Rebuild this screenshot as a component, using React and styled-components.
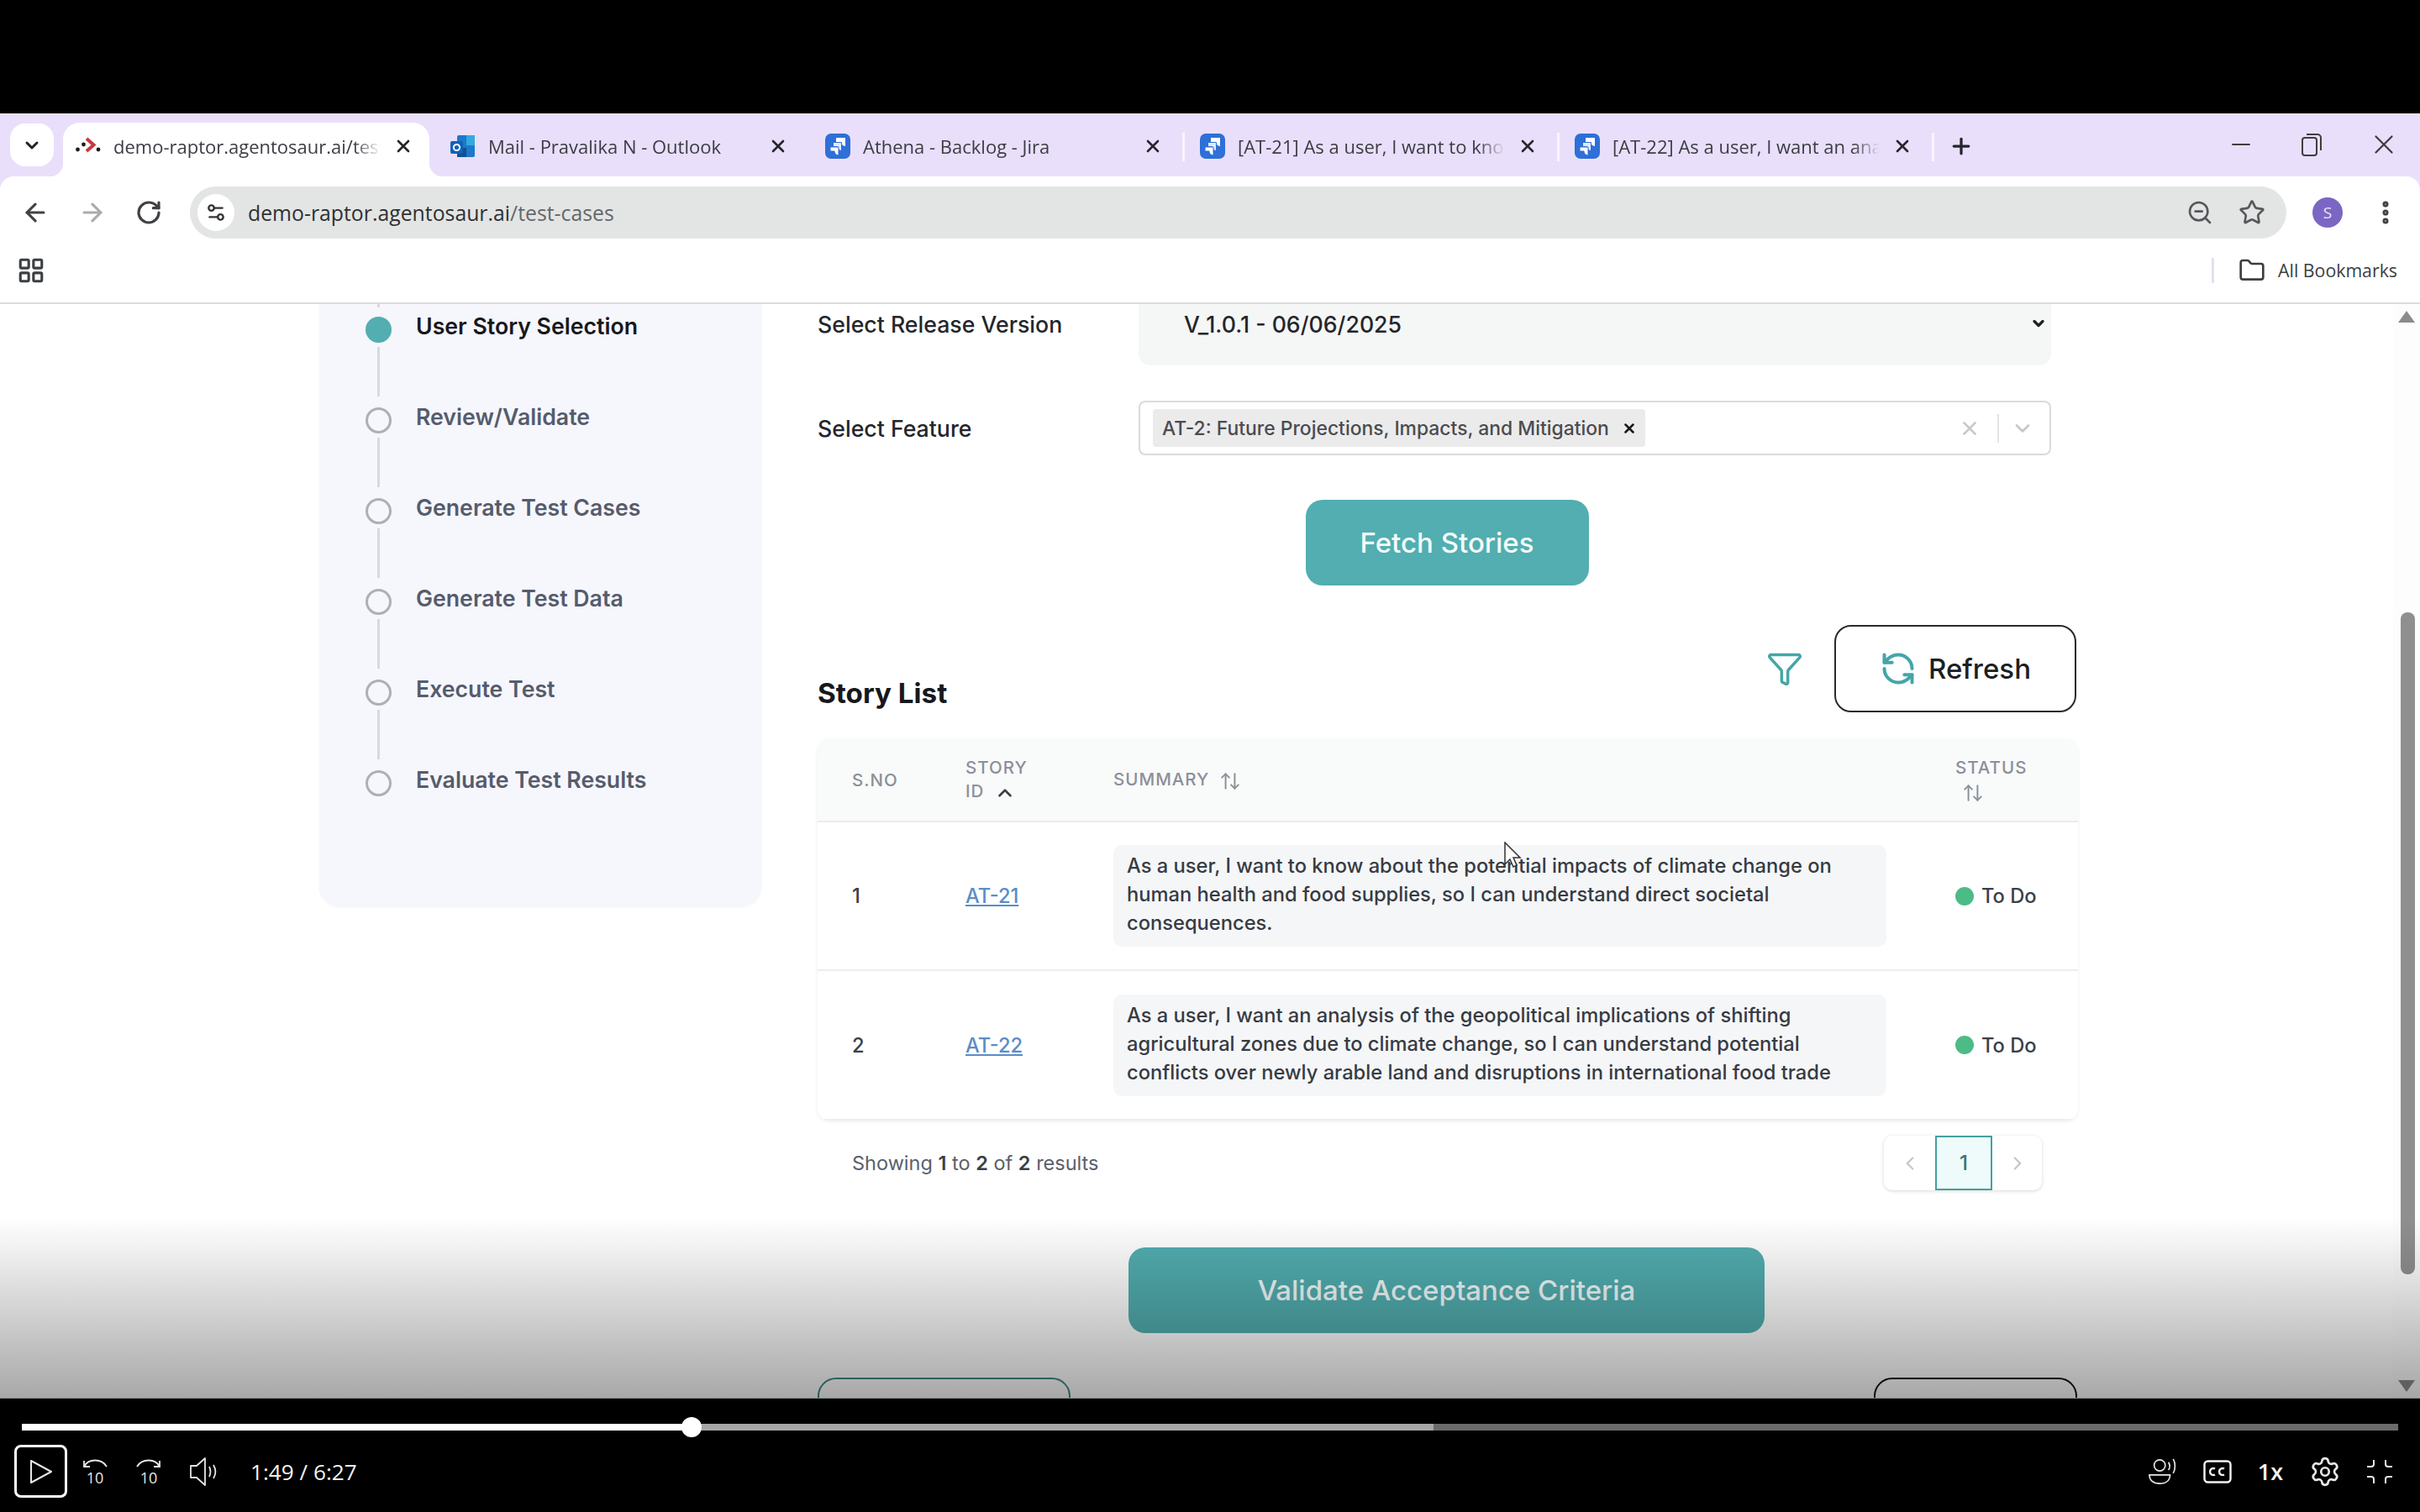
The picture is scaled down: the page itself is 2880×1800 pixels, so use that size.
import React from 'react'
import styled, { createGlobalStyle, css } from 'styled-components'
import { ChevronDown, ChevronUp, ChevronLeft, ChevronRight, X, Plus, Minus, ArrowLeft, ArrowRight, RotateCw, Star, EllipsisVertical, Folder, LayoutGrid, Settings2, ZoomOut, Filter, RefreshCcw, ArrowUpDown, Settings } from 'lucide-react'

const GlobalStyle = createGlobalStyle`
  html, body { margin: 0; padding: 0; background: #000; }
  * { box-sizing: border-box; }
`

const Screen = styled.div`
  width: 2880px;
  height: 1800px;
  overflow: hidden;
  background: #000;
  display: flex;
  flex-direction: column;
  font-family: Inter, "Liberation Sans", sans-serif;
`

const TopBand = styled.div`
  height: 135px;
  flex: none;
`

const Chrome = styled.div`
  background: #e9dffb;
  flex: none;
`

const TabStrip = styled.div`
  height: 75px;
  display: flex;
  align-items: flex-end;
  padding-left: 12px;
  font-family: "Open Sans", "Liberation Sans", sans-serif;
  font-size: 22px;
  color: #3c3c44;
`

const TabSearch = styled.div`
  width: 52px;
  height: 51px;
  margin: 0 11px 12px 0;
  border-radius: 18px;
  background: #fff;
  display: flex;
  align-items: center;
  justify-content: center;
  color: #222;
`

const flare = css`
  &::before,
  &::after {
    content: '';
    position: absolute;
    bottom: 0;
    width: 16px;
    height: 16px;
  }
  &::before {
    left: -16px;
    background: radial-gradient(circle at 0 0, transparent 16px, #fff 16.5px);
  }
  &::after {
    right: -16px;
    background: radial-gradient(circle at 100% 0, transparent 16px, #fff 16.5px);
  }
`

const separator = css`
  &::after {
    content: '';
    position: absolute;
    right: -7px;
    top: 12px;
    width: 3px;
    height: 34px;
    background: #f8f5fe;
  }
`

const Tab = styled.div`
  position: relative;
  width: 436px;
  height: 64px;
  margin-right: 10px;
  padding: 0 19px 8px 15px;
  display: flex;
  align-items: center;
  gap: 15px;
  border-radius: 20px 20px 0 0;
  background: ${p => (p.$active ? '#fff' : 'transparent')};
  ${p => p.$active && flare}
  ${p => p.$sep && separator}
`

const TabTitle = styled.span`
  flex: 1;
  overflow: hidden;
  white-space: nowrap;
  mask-image: linear-gradient(to right, #000 90%, transparent 100%);
`

const Favicon = styled.svg`
  width: 30px;
  height: 30px;
  flex: none;
`

const TabPlus = styled.div`
  width: 40px;
  height: 64px;
  margin-left: 9px;
  padding-bottom: 8px;
  display: flex;
  align-items: center;
  justify-content: center;
  color: #26262c;
`

const WindowControls = styled.div`
  margin-left: auto;
  height: 75px;
  padding: 0 24px 2px 0;
  display: flex;
  align-items: center;
  gap: 54px;
  color: #3d3d44;
`

const Toolbar = styled.div`
  height: 75px;
  background: #fff;
  border-radius: 16px 16px 0 0;
  display: flex;
  align-items: center;
  padding: 12px 24px 1px 25px;
  color: #3f4245;
`

const NavIcons = styled.div`
  display: flex;
  align-items: center;
  gap: 34px;
  margin-right: 33px;
`

const AddressBar = styled.div`
  flex: 1;
  height: 62px;
  border-radius: 31px;
  background: #e3e5e4;
  display: flex;
  align-items: center;
  padding: 0 25px 0 9px;
  font-family: "Open Sans", "Liberation Sans", sans-serif;
  font-size: 24.8px;
`

const SiteInfo = styled.div`
  width: 44px;
  height: 44px;
  border-radius: 50%;
  background: #fff;
  display: flex;
  align-items: center;
  justify-content: center;
  margin-right: 16px;
  color: #333;
`

const Host = styled.span`
  color: #2f3133;
`

const UrlPath = styled.span`
  color: #65686b;
`

const AddressIcons = styled.div`
  margin-left: auto;
  display: flex;
  align-items: center;
  gap: 30px;
  color: #55585b;
`

const Avatar = styled.div`
  width: 36px;
  height: 36px;
  margin: 0 34px 0 31px;
  border-radius: 50%;
  background: #7c66c4;
  color: #e9e3f8;
  font-size: 19px;
  display: flex;
  align-items: center;
  justify-content: center;
  font-family: "Open Sans", sans-serif;
`

const BookmarksBar = styled.div`
  height: 77px;
  background: #fff;
  border-bottom: 2px solid #dcdcdc;
  padding: 0 27px 2px 20px;
  display: flex;
  align-items: center;
  font-family: "Open Sans", "Liberation Sans", sans-serif;
  font-size: 21.3px;
  color: #3c3f42;
`

const BookmarkSep = styled.div`
  margin-left: auto;
  width: 3px;
  height: 30px;
  background: #e4dff0;
  margin-right: 29px;
`

const FolderLabel = styled.span`
  margin-left: 15px;
`

const Viewport = styled.div`
  position: relative;
  height: 1303px;
  flex: none;
  overflow: hidden;
  background: #fff;
  display: flex;
  align-items: flex-start;
  padding-left: 380px;
  border-bottom: 1px solid #7f8a80;
`

const Sidebar = styled.aside`
  width: 526px;
  height: 717px;
  flex: none;
  background: #f6f6fd;
  border-radius: 0 0 24px 24px;
  box-shadow: 0 1px 3px rgba(30, 30, 60, 0.05);
  padding-left: 55px;
  margin-right: 67px;
`

const Stub = styled.div`
  width: 3px;
  height: 4px;
  margin: 0 0 11px 14px;
  background: #d8d8de;
`

const Step = styled.div`
  display: flex;
  gap: 29px;
  height: 108px;
`

const Rail = styled.div`
  width: 31px;
  display: flex;
  flex-direction: column;
  align-items: center;
  gap: 5px;
`

const Dot = styled.div`
  width: 31px;
  height: 31px;
  flex: none;
  border-radius: 50%;
  background: ${p => (p.$active ? '#52aeb0' : 'transparent')};
  border: ${p => (p.$active ? 'none' : '3px solid #adb0b5')};
`

const Connector = styled.div`
  width: 3px;
  height: 59px;
  background: #d8d8de;
`

const StepLabel = styled.div`
  font-size: 26.7px;
  line-height: 31px;
  font-weight: 600;
  margin-top: -4px;
  color: ${p => (p.$active ? '#17181c' : '#555c6c')};
`

const Main = styled.main`
  width: 1500px;
  flex: none;
`

const FormRow = styled.div`
  display: flex;
  align-items: ${p => (p.$top ? 'flex-start' : 'center')};
  margin: 0 32px ${p => p.$after}px 0;
`

const FieldLabel = styled.label`
  width: 382px;
  flex: none;
  font-size: 26.7px;
  line-height: 48px;
  font-weight: 500;
  color: #24262b;
`

const SelectBox = styled.div`
  flex: 1;
  height: 73px;
  background: #f5f6f6;
  border-radius: 0 0 14px 14px;
  padding: 0 5px 0 54px;
  display: flex;
  justify-content: space-between;
  font-size: 26.7px;
  line-height: 48px;
  font-weight: 500;
  color: #24262b;
`

const SelectCaret = styled.span`
  display: flex;
  margin-top: 13px;
  height: 20px;
  color: #222;
`

const MultiBox = styled.div`
  flex: 1;
  height: 65px;
  border: 2px solid #dadada;
  border-radius: 8px;
  background: #fff;
  padding: 0 18px 0 15px;
  display: flex;
  align-items: center;
`

const Chip = styled.div`
  height: 45px;
  display: flex;
  align-items: center;
  gap: 15px;
  padding: 0 10px 0 11px;
  background: #ebebeb;
  border-radius: 4px;
  font-size: 22.9px;
  font-weight: 500;
  color: #4b4b50;
`

const ChipClose = styled.span`
  color: #17181c;
  display: flex;
`

const BoxActions = styled.div`
  margin-left: auto;
  display: flex;
  align-items: center;
  color: #c9c9c9;
`

const BoxDivider = styled.div`
  width: 2px;
  height: 34px;
  margin: 0 14px 0 20px;
  background: #e3e3e3;
`

const FetchRow = styled.div`
  display: flex;
  justify-content: center;
  padding-right: 2px;
  margin-bottom: 47px;
`

const PrimaryButton = styled.button`
  width: ${p => p.$w}px;
  height: 102px;
  border: none;
  border-radius: 20px;
  background: #52aeb0;
  color: #f2fbfb;
  font-family: Inter, sans-serif;
  font-size: 33px;
  font-weight: 500;
`

const ListHeader = styled.div`
  display: flex;
  align-items: flex-end;
  justify-content: space-between;
  margin-bottom: 32px;
  padding-right: 2px;
`

const ListTitle = styled.h2`
  margin: 0;
  font-size: 33.2px;
  line-height: 46px;
  font-weight: 700;
  color: #17181c;
`

const ListActions = styled.div`
  display: flex;
  align-items: center;
  gap: 37px;
  color: #45a5a8;
`

const RefreshButton = styled.button`
  width: 288px;
  height: 104px;
  background: #fff;
  border: 2px solid #2a2a2a;
  border-radius: 20px;
  display: flex;
  align-items: center;
  justify-content: center;
  gap: 14px;
  color: #1d1f23;
  font-family: Inter, sans-serif;
  font-size: 33px;
  font-weight: 500;

  svg {
    color: #45a5a8;
  }
`

const Table = styled.table`
  width: 1500px;
  table-layout: fixed;
  border-collapse: collapse;
  border-radius: 14px;
  box-shadow: 0 1px 4px rgba(0, 0, 0, 0.08);
  overflow: hidden;
`

const HeadRow = styled.tr`
  height: 98px;
  background: #f9fafa;
  border-bottom: 2px solid #ececec;
`

const HeadCell = styled.th`
  padding: 0 0 0 ${p => p.$pad || 0}px;
  text-align: left;
  font-size: 20.5px;
  line-height: 28px;
  font-weight: 500;
  letter-spacing: 1px;
  color: #8b9098;
  vertical-align: middle;
`

const SortIcon = styled.span`
  display: inline-flex;
  vertical-align: middle;
  margin-left: ${p => p.$left}px;
  color: #8b9098;
`

const BodyRow = styled.tr`
  height: ${p => p.$h}px;
  border-bottom: 2px solid #ededed;
`

const Cell = styled.td`
  padding: 0 0 0 ${p => p.$pad || 0}px;
  font-size: 23.7px;
  font-weight: 500;
  color: #3a3f48;
  vertical-align: middle;
`

const StoryLink = styled.a`
  color: #5b8dc7;
  text-decoration: underline;
`

const SummaryBox = styled.div`
  width: 920px;
  height: 121px;
  padding: 8px 16px;
  border-radius: 10px;
  background: #f5f6f7;
  line-height: 34px;
  color: #363b44;
`

const StatusBadge = styled.div`
  display: flex;
  align-items: center;
  gap: 9px;
`

const StatusDot = styled.span`
  width: 22px;
  height: 22px;
  border-radius: 50%;
  background: #4cbb86;
`

const TableFooter = styled.div`
  display: flex;
  align-items: center;
  justify-content: space-between;
  margin: 18px 0 68px;
  padding: 0 43px 0 41px;
`

const ResultText = styled.div`
  font-size: 23.5px;
  color: #5a606b;

  b {
    font-weight: 600;
    color: #3a3f48;
  }
`

const Pager = styled.div`
  height: 65px;
  display: flex;
  border-radius: 10px;
  box-shadow: 0 1px 4px rgba(0, 0, 0, 0.16);
`

const PagerButton = styled.div`
  width: ${p => p.$w}px;
  display: flex;
  align-items: center;
  justify-content: center;
  font-size: 24px;
  font-weight: 500;
  color: ${p => (p.$active ? '#37757a' : '#c2c5ca')};
  background: ${p => (p.$active ? '#effbfb' : 'transparent')};
  border: ${p => (p.$active ? '2px solid #45a0a2' : 'none')};
`

const ValidateRow = styled.div`
  display: flex;
  justify-content: center;
  padding-right: 3px;
  margin-bottom: 53px;
`

const BottomRow = styled.div`
  display: flex;
  justify-content: space-between;
  padding-right: 1px;
`

const OutlineButton = styled.div`
  width: ${p => p.$w}px;
  height: 100px;
  border: 2px solid ${p => p.$color};
  border-radius: 22px;
`

const FadeOverlay = styled.div`
  position: absolute;
  left: 0;
  right: 0;
  bottom: 0;
  height: 214px;
  background: linear-gradient(to bottom, rgba(0, 0, 0, 0), rgba(0, 0, 0, 0.34));
  pointer-events: none;
`

const Scrollbar = styled.div`
  position: absolute;
  top: 0;
  right: 0;
  bottom: 0;
  width: 32px;
  background: #fdfdfd;
`

const ScrollArrow = styled.div`
  position: absolute;
  left: 6px;
  ${p => (p.$down ? 'bottom: 7px;' : 'top: 8px;')}
  width: 0;
  height: 0;
  border-left: 10px solid transparent;
  border-right: 10px solid transparent;
  ${p => (p.$down ? 'border-top: 14px solid #8b8b8b;' : 'border-bottom: 14px solid #8b8b8b;')}
`

const ScrollThumb = styled.div`
  position: absolute;
  left: 9px;
  top: 367px;
  width: 17px;
  height: 788px;
  border-radius: 8px;
  background: #8f8f8f;
`

const MouseCursor = styled.svg`
  position: absolute;
  left: 1790px;
  top: 640px;
  width: 22px;
  height: 32px;
`

const Player = styled.div`
  flex: 1;
  background: #000;
  padding-top: 30px;
  color: #e6e6e6;
`

const Progress = styled.div`
  position: relative;
  height: 8px;
  margin: 0 26px;
  background: #6b6b6b;
`

const ProgressFill = styled.div`
  position: absolute;
  top: 0;
  bottom: 0;
  left: 0;
  background: ${p => p.$color};
`

const Thumb = styled.div`
  position: absolute;
  top: -8px;
  width: 24px;
  height: 24px;
  margin-left: -12px;
  border-radius: 50%;
  background: #fff;
`

const PlayerBar = styled.div`
  display: flex;
  align-items: center;
  justify-content: space-between;
  padding: 17px 33px 0 17px;
`

const PlayerGroup = styled.div`
  display: flex;
  align-items: center;
  gap: ${p => p.$gap}px;
`

const PlayButton = styled.div`
  width: 63px;
  height: 63px;
  border: 3px solid #fff;
  border-radius: 8px;
  margin-right: -15px;
  display: flex;
  align-items: center;
  justify-content: center;
`

const TimeText = styled.span`
  margin-left: 7px;
  font-family: "Open Sans", sans-serif;
  font-size: 26.2px;
  color: #f2f2f2;
`

const SpeedText = styled.span`
  font-family: "Open Sans", sans-serif;
  font-size: 27px;
  font-weight: 600;
  color: #f2f2f2;
`

const RaptorIcon = () => (
  <Favicon viewBox="0 0 30 30">
    <circle cx="2.5" cy="19" r="2.4" fill="#1d1d1f" />
    <circle cx="9.5" cy="13" r="2.4" fill="#1d1d1f" />
    <path d="M13 6l8.5 7.5L13 21" fill="none" stroke="#c9393d" strokeWidth="4" />
    <circle cx="27" cy="19" r="2.4" fill="#1d1d1f" />
  </Favicon>
)

const OutlookIcon = () => (
  <Favicon viewBox="0 0 30 30">
    <rect x="8" y="2" width="21" height="26" rx="2" fill="#1d78c9" />
    <rect x="19" y="2" width="10" height="12" fill="#35a8e0" />
    <rect x="8" y="17" width="11" height="11" fill="#124f96" />
    <rect x="0" y="9" width="15" height="15" rx="2" fill="#0f63b5" />
    <circle cx="7.5" cy="16.5" r="3.6" fill="none" stroke="#fff" strokeWidth="2" />
  </Favicon>
)

const JiraIcon = () => (
  <Favicon viewBox="0 0 30 30">
    <rect x="0" y="0" width="30" height="30" rx="7" fill="#2e6fd8" />
    <path d="M13 5h11v10a5 5 0 0 1-5-5h-6z" fill="#fff" />
    <path d="M9.5 10.5h10v10a5 5 0 0 1-5-5h-5z" fill="#dfeaff" stroke="#2e6fd8" strokeWidth="1" />
    <path d="M6 16h10v10a5 5 0 0 1-5-5H6z" fill="#fff" stroke="#2e6fd8" strokeWidth="1" />
  </Favicon>
)

const SeekIcon = ({ flip }) => (
  <svg width="32" height="30" viewBox="0 0 32 30" fill="none" stroke="currentColor" strokeWidth="1.8">
    <g transform={flip ? 'translate(32 0) scale(-1 1)' : undefined}>
      <path d="M3 9C8 -1 24 -1 30 9" />
      <path d="M3 2v7h7" />
    </g>
    <text x="16" y="29" textAnchor="middle" fontSize="18" fill="currentColor" stroke="none" fontFamily="Open Sans, sans-serif">10</text>
  </svg>
)

const SpeakerIcon = () => (
  <svg width="34" height="36" viewBox="0 0 34 36" fill="none" stroke="currentColor" strokeWidth="1.8" strokeLinejoin="round">
    <path d="M2 11h7L19 2v32L9 25H2z" />
    <path d="M24 12c2 4 2 8 0 12M29 10c3 5 3 11 0 16" />
  </svg>
)

const VoiceIcon = () => (
  <svg width="34" height="34" viewBox="0 0 36 34" fill="none" stroke="currentColor" strokeWidth="1.8">
    <circle cx="14" cy="9" r="7" />
    <path d="M1 21h26c0 7-5 11-13 11S1 28 1 21z" />
    <path d="M25 5c2 3 2 7 0 10M31 1c3 5 3 13 0 18" />
  </svg>
)

const CaptionIcon = () => (
  <svg width="34" height="28" viewBox="0 0 34 28" fill="none" stroke="#f2f2f2" strokeWidth="2.4">
    <rect x="1.5" y="1.5" width="31" height="25" rx="4" />
    <path d="M14 10.5a4 4 0 1 0 0 7M25 10.5a4 4 0 1 0 0 7" />
  </svg>
)

const ExitFullIcon = () => (
  <svg width="30" height="30" viewBox="0 0 30 30" fill="none" stroke="currentColor" strokeWidth="2">
    <path d="M8 1v5a3 3 0 0 1-3 3H0M22 1v5a3 3 0 0 0 3 3h5M8 29v-5a3 3 0 0 0-3-3H0M22 29v-5a3 3 0 0 1 3-3h5" />
  </svg>
)

const steps = ['User Story Selection', 'Review/Validate', 'Generate Test Cases', 'Generate Test Data', 'Execute Test', 'Evaluate Test Results']

const tabs = [
  { title: 'demo-raptor.agentosaur.ai/test-cases', icon: <RaptorIcon />, active: true },
  { title: 'Mail - Pravalika N - Outlook', icon: <OutlookIcon /> },
  { title: 'Athena - Backlog - Jira', icon: <JiraIcon />, sep: true },
  { title: '[AT-21] As a user, I want to know about', icon: <JiraIcon />, sep: true },
  { title: '[AT-22] As a user, I want an analysis', icon: <JiraIcon />, sep: true },
]

const stories = [
  {
    id: 'AT-21',
    h: 177,
    summary: 'As a user, I want to know about the potential impacts of climate change on human health and food supplies, so I can understand direct societal consequences.',
  },
  {
    id: 'AT-22',
    h: 178,
    summary: 'As a user, I want an analysis of the geopolitical implications of shifting agricultural zones due to climate change, so I can understand potential conflicts over newly arable land and disruptions in international food trade',
  },
]

const playedPct = 28.2
const bufferedPct = 59.4

const App = () => {
  return (
    <Screen>
      <GlobalStyle />
      <TopBand />
      <Chrome>
        <TabStrip>
          <TabSearch><ChevronDown size={24} strokeWidth={3} /></TabSearch>
          {tabs.map(tab => (
            <Tab key={tab.title} $active={tab.active} $sep={tab.sep}>
              {tab.icon}
              <TabTitle>{tab.title}</TabTitle>
              <X size={24} strokeWidth={2.6} color="#26262c" />
            </Tab>
          ))}
          <TabPlus><Plus size={30} strokeWidth={2.6} /></TabPlus>
          <WindowControls>
            <Minus size={34} strokeWidth={1.5} />
            <svg width="26" height="30" viewBox="0 0 26 30" fill="none" stroke="currentColor" strokeWidth="2">
              <rect x="2" y="7" width="17" height="21" rx="3" />
              <path d="M7 3h13a4 4 0 0 1 4 4v15" />
            </svg>
            <X size={38} strokeWidth={1.4} />
          </WindowControls>
        </TabStrip>
        <Toolbar>
          <NavIcons>
            <ArrowLeft size={34} strokeWidth={2.2} />
            <ArrowRight size={34} strokeWidth={2.2} color="#a9abad" />
            <RotateCw size={32} strokeWidth={2.4} />
          </NavIcons>
          <AddressBar>
            <SiteInfo><Settings2 size={26} strokeWidth={2.2} /></SiteInfo>
            <Host>demo-raptor.agentosaur.ai</Host>
            <UrlPath>/test-cases</UrlPath>
            <AddressIcons>
              <ZoomOut size={32} strokeWidth={2} />
              <Star size={32} strokeWidth={2} />
            </AddressIcons>
          </AddressBar>
          <Avatar>S</Avatar>
          <EllipsisVertical size={34} strokeWidth={3} />
        </Toolbar>
        <BookmarksBar>
          <LayoutGrid size={34} strokeWidth={2.2} />
          <BookmarkSep />
          <Folder size={32} strokeWidth={2} />
          <FolderLabel>All Bookmarks</FolderLabel>
        </BookmarksBar>
      </Chrome>

      <Viewport>
        <Sidebar>
          <Stub />
          {steps.map((label, i) => (
            <Step key={label}>
              <Rail>
                <Dot $active={i === 0} />
                {i < steps.length - 1 && <Connector />}
              </Rail>
              <StepLabel $active={i === 0}>{label}</StepLabel>
            </Step>
          ))}
        </Sidebar>

        <Main>
          <FormRow $top $after={42}>
            <FieldLabel>Select Release Version</FieldLabel>
            <SelectBox>
              V_1.0.1 - 06/06/2025
              <SelectCaret><ChevronDown size={20} strokeWidth={4} /></SelectCaret>
            </SelectBox>
          </FormRow>
          <FormRow $after={53}>
            <FieldLabel>Select Feature</FieldLabel>
            <MultiBox>
              <Chip>
                AT-2: Future Projections, Impacts, and Mitigation
                <ChipClose><X size={18} strokeWidth={3.4} /></ChipClose>
              </Chip>
              <BoxActions>
                <X size={26} strokeWidth={2.4} />
                <BoxDivider />
                <ChevronDown size={28} strokeWidth={2.4} />
              </BoxActions>
            </MultiBox>
          </FormRow>
          <FetchRow>
            <PrimaryButton $w={337}>Fetch Stories</PrimaryButton>
          </FetchRow>
          <ListHeader>
            <ListTitle>Story List</ListTitle>
            <ListActions>
              <Filter size={44} strokeWidth={1.9} />
              <RefreshButton>
                <RefreshCcw size={44} strokeWidth={2.2} />
                Refresh
              </RefreshButton>
            </ListActions>
          </ListHeader>

          <Table>
            <colgroup>
              <col width="176" />
              <col width="176" />
              <col width="1002" />
              <col width="146" />
            </colgroup>
            <thead>
              <HeadRow>
                <HeadCell $pad={41}>S.NO</HeadCell>
                <HeadCell>
                  STORY<br />ID
                  <SortIcon $left={12}><ChevronUp size={26} strokeWidth={2.4} color="#3a3f48" /></SortIcon>
                </HeadCell>
                <HeadCell>
                  SUMMARY
                  <SortIcon $left={12}><ArrowUpDown size={26} strokeWidth={1.8} /></SortIcon>
                </HeadCell>
                <HeadCell>
                  STATUS<br />
                  <SortIcon $left={8}><ArrowUpDown size={26} strokeWidth={1.8} /></SortIcon>
                </HeadCell>
              </HeadRow>
            </thead>
            <tbody>
              {stories.map((story, i) => (
                <BodyRow key={story.id} $h={story.h}>
                  <Cell $pad={41}>{i + 1}</Cell>
                  <Cell><StoryLink href="#">{story.id}</StoryLink></Cell>
                  <Cell><SummaryBox>{story.summary}</SummaryBox></Cell>
                  <Cell>
                    <StatusBadge><StatusDot />To Do</StatusBadge>
                  </Cell>
                </BodyRow>
              ))}
            </tbody>
          </Table>

          <TableFooter>
            <ResultText>Showing <b>1</b> to <b>2</b> of <b>2</b> results</ResultText>
            <Pager>
              <PagerButton $w={61}><ChevronLeft size={26} strokeWidth={2} /></PagerButton>
              <PagerButton $w={68} $active>1</PagerButton>
              <PagerButton $w={59}><ChevronRight size={26} strokeWidth={2} /></PagerButton>
            </Pager>
          </TableFooter>

          <ValidateRow>
            <PrimaryButton $w={757}>Validate Acceptance Criteria</PrimaryButton>
          </ValidateRow>
          <BottomRow>
            <OutlineButton $w={301} $color="#3f8a8c" />
            <OutlineButton $w={242} $color="#111" />
          </BottomRow>
        </Main>

        <MouseCursor viewBox="0 0 22 32">
          <path d="M1 1v26l6-6 4 9 4-2-4-9h8z" fill="#fff" stroke="#333" strokeWidth="1.5" />
        </MouseCursor>
        <Scrollbar>
          <ScrollArrow />
          <ScrollThumb />
          <ScrollArrow $down />
        </Scrollbar>
        <FadeOverlay />
      </Viewport>

      <Player>
        <Progress>
          <ProgressFill $color="#a6a6a6" style={{ width: `${bufferedPct}%` }} />
          <ProgressFill $color="#fff" style={{ width: `${playedPct}%` }} />
          <Thumb style={{ left: `${playedPct}%` }} />
        </Progress>
        <PlayerBar>
          <PlayerGroup $gap={32}>
            <PlayButton>
              <svg width="28" height="30" viewBox="0 0 28 30" fill="none" stroke="currentColor" strokeWidth="2" strokeLinejoin="round">
                <path d="M2 2l24 13L2 28z" />
              </svg>
            </PlayButton>
            <SeekIcon />
            <SeekIcon flip />
            <SpeakerIcon />
            <TimeText>1:49 / 6:27</TimeText>
          </PlayerGroup>
          <PlayerGroup $gap={31}>
            <VoiceIcon />
            <CaptionIcon />
            <SpeedText>1x</SpeedText>
            <Settings size={38} strokeWidth={1.7} />
            <ExitFullIcon />
          </PlayerGroup>
        </PlayerBar>
      </Player>
    </Screen>
  )
}

export default App
